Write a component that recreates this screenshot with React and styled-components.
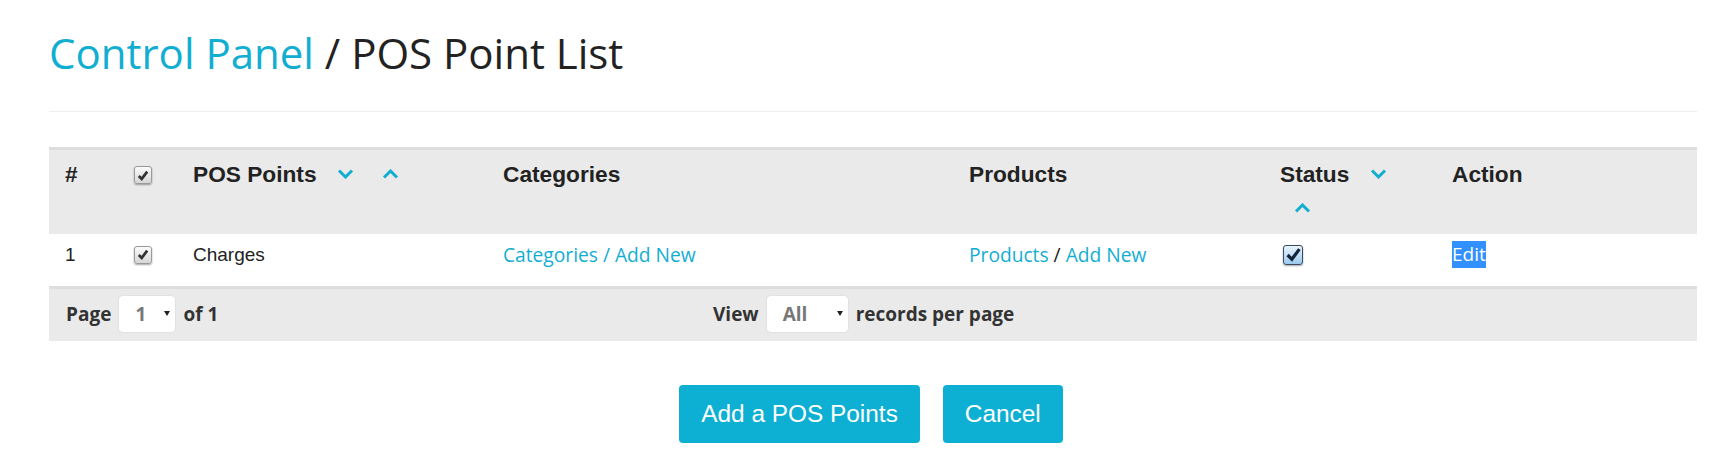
import React from 'react';
import styled, { createGlobalStyle } from 'styled-components';

const CYAN = '#12aed2';

const GlobalStyle = createGlobalStyle`
  html, body {
    margin: 0;
    padding: 0;
    background: #ffffff;
  }
  body {
    font-family: "Open Sans", "Liberation Sans", sans-serif;
    color: #222222;
  }
`;

// 정렬 화살표 (chevron)
const Chevron = ({ up }) => (
    <SortIcon>
        <svg width="17" height="10" viewBox="0 0 17 10">
            <polyline
                points={up ? '2,8.5 8.5,2 15,8.5' : '2,1.5 8.5,8 15,1.5'}
                fill="none"
                stroke={CYAN}
                strokeWidth="3"
            />
        </svg>
    </SortIcon>
);

const CheckBox = ({ blue }) => (
    <Box $blue={blue}>
        <svg width={blue ? 15 : 12} height={blue ? 14 : 11} viewBox="0 0 14 13">
            <path
                d={blue ? 'M1.5 6.5 L5.5 10.5 L12.5 1' : 'M2 7 L5.5 10.5 L12 2'}
                fill="none"
                stroke={blue ? '#15233a' : '#333'}
                strokeWidth={blue ? 3 : 3.2}
            />
        </svg>
    </Box>
);

const App = () => {
    return (
        <>
            <GlobalStyle />
            <PageWrap>
                <Title>
                    <Crumb>Control Panel</Crumb> / POS Point List
                </Title>
                <Divider />

                <Grid>
                    <colgroup>
                        <col style={{ width: 69 }} />
                        <col style={{ width: 59 }} />
                        <col style={{ width: 310 }} />
                        <col style={{ width: 466 }} />
                        <col style={{ width: 311 }} />
                        <col style={{ width: 172 }} />
                        <col style={{ width: 261 }} />
                    </colgroup>
                    <thead>
                        <tr>
                            <Th>#</Th>
                            <Th><CheckBox /></Th>
                            <Th>POS Points{' '}<Chevron />{' '}<Chevron up /></Th>
                            <Th>Categories</Th>
                            <Th>Products</Th>
                            <Th>Status{' '}<Chevron />{' '}<Chevron up /></Th>
                            <Th>Action</Th>
                        </tr>
                    </thead>
                    <tbody>
                        <tr>
                            <Td>1</Td>
                            <Td><CheckBox /></Td>
                            <Td>Charges</Td>
                            <Td>
                                <LinkText>Categories / Add New</LinkText>
                            </Td>
                            <Td>
                                <LinkText>Products</LinkText>
                                <Slash> / </Slash>
                                <LinkText>Add New</LinkText>
                            </Td>
                            <Td><StatusCell><CheckBox blue /></StatusCell></Td>
                            <Td><EditLink>Edit</EditLink></Td>
                        </tr>
                    </tbody>
                </Grid>

                <Footer>
                    <PagerGroup $w={647}>
                        <span>Page</span>
                        <Select $w={58}>1<Caret /></Select>
                        <span>of 1</span>
                    </PagerGroup>
                    <PagerGroup>
                        <span>View</span>
                        <Select $w={83}>All<Caret /></Select>
                        <span>records per page</span>
                    </PagerGroup>
                </Footer>

                <Buttons>
                    <Button>Add a POS Points</Button>
                    <Button>Cancel</Button>
                </Buttons>
            </PageWrap>
        </>
    );
};

// 스타일 컴포넌트
const PageWrap = styled.div`
  padding: 30px 20px 0 49px;
`;

const Title = styled.h1`
  margin: 0;
  font-family: "Open Sans", sans-serif;
  font-weight: 400;
  font-size: 42px;
  line-height: 46px;
  color: #222222;
`;

const Crumb = styled.span`
  color: ${CYAN};
`;

const Divider = styled.hr`
  margin: 35px 0;
  height: 0;
  border: 0;
  border-top: 1px solid #eeeeee;
`;

const Grid = styled.table`
  width: 100%;
  table-layout: fixed;
  border-collapse: separate;
  border-spacing: 0;
  font-family: "Liberation Sans", Arial, sans-serif;
  color: #222222;
`;

const Th = styled.th`
  background: #eaeaea;
  border-top: 3px solid #dddddd;
  padding: 7px 16px 9px;
  font-size: 22.7px;
  font-weight: 700;
  line-height: 34px;
  text-align: left;
  vertical-align: top;
`;

const Td = styled.td`
  background: #ffffff;
  border-bottom: 3px solid #dddddd;
  padding: 7px 16px 17px;
  font-size: 19px;
  line-height: 27px;
  vertical-align: top;
`;

const SortIcon = styled.span`
  display: inline-block;
  margin: 0 8px 0 14px;
  line-height: 0;
  vertical-align: middle;
  position: relative;
  top: -2px;
`;

const Box = styled.span`
  display: inline-flex;
  align-items: center;
  justify-content: center;
  box-sizing: border-box;
  width: ${p => (p.$blue ? '20px' : '18px')};
  height: ${p => (p.$blue ? '20px' : '18px')};
  border: 1px solid ${p => (p.$blue ? '#3b4a5c' : '#9a9a9a')};
  border-radius: 3px;
  background: ${p => (p.$blue
        ? 'linear-gradient(#e8f4fd, #9ccaf0)'
        : 'linear-gradient(#fbfbfb, #d6d6d6)')};
  box-shadow: 0 1px 2px rgba(0, 0, 0, 0.35);
  vertical-align: middle;
  position: relative;
  top: -1px;
`;

const StatusCell = styled.span`
  display: inline-block;
  margin-left: 3px;
`;

const LinkText = styled.span`
  font-family: "Open Sans", sans-serif;
  font-size: 19.2px;
  color: ${CYAN};
`;

const Slash = styled.span`
  font-family: "Open Sans", sans-serif;
  font-size: 19.2px;
  color: #222222;
  white-space: pre;
`;

const EditLink = styled.span`
  display: inline-block;
  font-family: "Open Sans", sans-serif;
  background: #3390ff;
  color: #ffffff;
  line-height: 27px;
`;

const Footer = styled.div`
  display: flex;
  align-items: center;
  box-sizing: border-box;
  height: 52px;
  padding: 0 0 3px 17px;
  background: #eaeaea;
  font-family: "Open Sans", sans-serif;
  font-weight: 700;
  font-size: 19px;
  color: #333333;
`;

const PagerGroup = styled.div`
  display: flex;
  align-items: center;
  gap: 7px;
  width: ${p => (p.$w ? `${p.$w}px` : 'auto')};
`;

const Select = styled.div`
  display: inline-flex;
  align-items: center;
  justify-content: space-between;
  box-sizing: border-box;
  width: ${p => p.$w}px;
  height: 38px;
  padding: 0 5px 0 16px;
  background: #ffffff;
  border: 1px solid #e2e2e2;
  border-radius: 5px;
  color: #777777;
  font-weight: 700;
`;

const Caret = styled.span`
  width: 0;
  height: 0;
  border-left: 3.5px solid transparent;
  border-right: 3.5px solid transparent;
  border-top: 5px solid #222222;
`;

const Buttons = styled.div`
  display: flex;
  justify-content: center;
  gap: 23px;
  margin-top: 44px;
  padding-right: 4px;
`;

const Button = styled.button`
  height: 58px;
  padding: 0 22px;
  border: 0;
  border-radius: 4px;
  background: #0db0d3;
  color: #ffffff;
  font-family: "Liberation Sans", Arial, sans-serif;
  font-size: 24.4px;
  cursor: pointer;
`;

export default App;
